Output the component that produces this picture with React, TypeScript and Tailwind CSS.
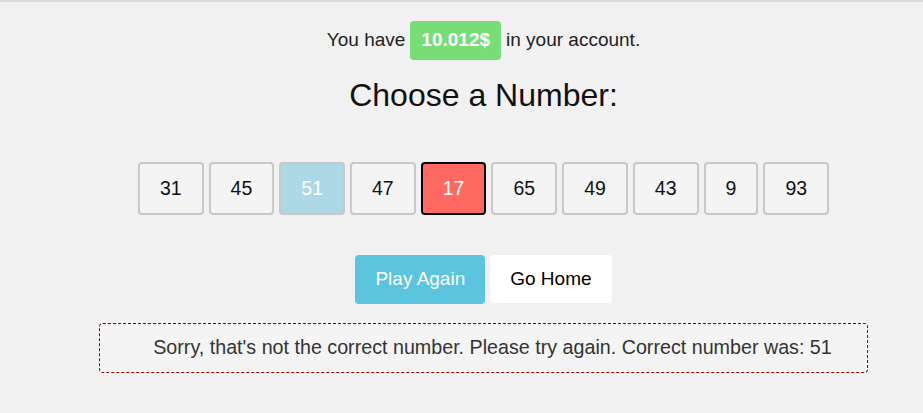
const numbers = [31, 45, 51, 47, 17, 65, 49, 43, 9, 93];
const correct = 51;
const picked = 17;

export default function App() {
  return (
    <div className="min-h-screen border-t-2 border-[#dcdcdc] bg-[#f1f1f1] pl-[44px] font-['Liberation_Sans',Arial,sans-serif] flex flex-col items-center">
      {/* BALANCE */}
      <div className="mt-[19px] flex items-center gap-[5px] text-[19px] text-[#222]">
        <span>You have</span>
        <span className="flex h-[39px] items-center rounded-[4px] bg-[#77dd77] px-[11px] text-[19px] font-bold text-white">
          10.012$
        </span>
        <span>in your account.</span>
      </div>

      {/* HEADING */}
      <h1 className="mt-[17px] text-[32px] leading-[37px] text-[#111]">
        Choose a Number:
      </h1>

      {/* NUMBER GRID */}
      <div className="mt-[48px] flex gap-[5px]">
        {numbers.map((n) => {
          let style = "bg-[#f4f4f4] border-[#c8c8c8] text-[#111]";
          if (n === correct) style = "bg-[#add8e6] border-[#c8c8c8] text-white";
          if (n === picked) style = "bg-[#ff6961] border-black text-white";
          return (
            <button
              key={n}
              type="button"
              className={`h-[53px] rounded-[4px] border-2 px-[20px] text-[19.5px] ${style}`}
            >
              {n}
            </button>
          );
        })}
      </div>

      {/* ACTIONS */}
      <div className="mt-[40px] flex gap-[5px]">
        <button
          type="button"
          className="h-[49px] rounded-[4px] bg-[#5bc5de] px-[20px] text-[19px] text-white"
        >
          Play Again
        </button>
        <button
          type="button"
          className="h-[48px] rounded-[4px] bg-white px-[20px] text-[19px] text-black"
        >
          Go Home
        </button>
      </div>

      {/* RESULT */}
      <div className="mt-[19px] flex h-[50px] w-[769px] items-center justify-center rounded-[4px] border border-dashed border-[#8b0000] bg-[#f4f4f4] pl-[18px] text-[19.7px] text-[#333]">
        Sorry, that's not the correct number. Please try again. Correct number was: 51
      </div>
    </div>
  );
}
